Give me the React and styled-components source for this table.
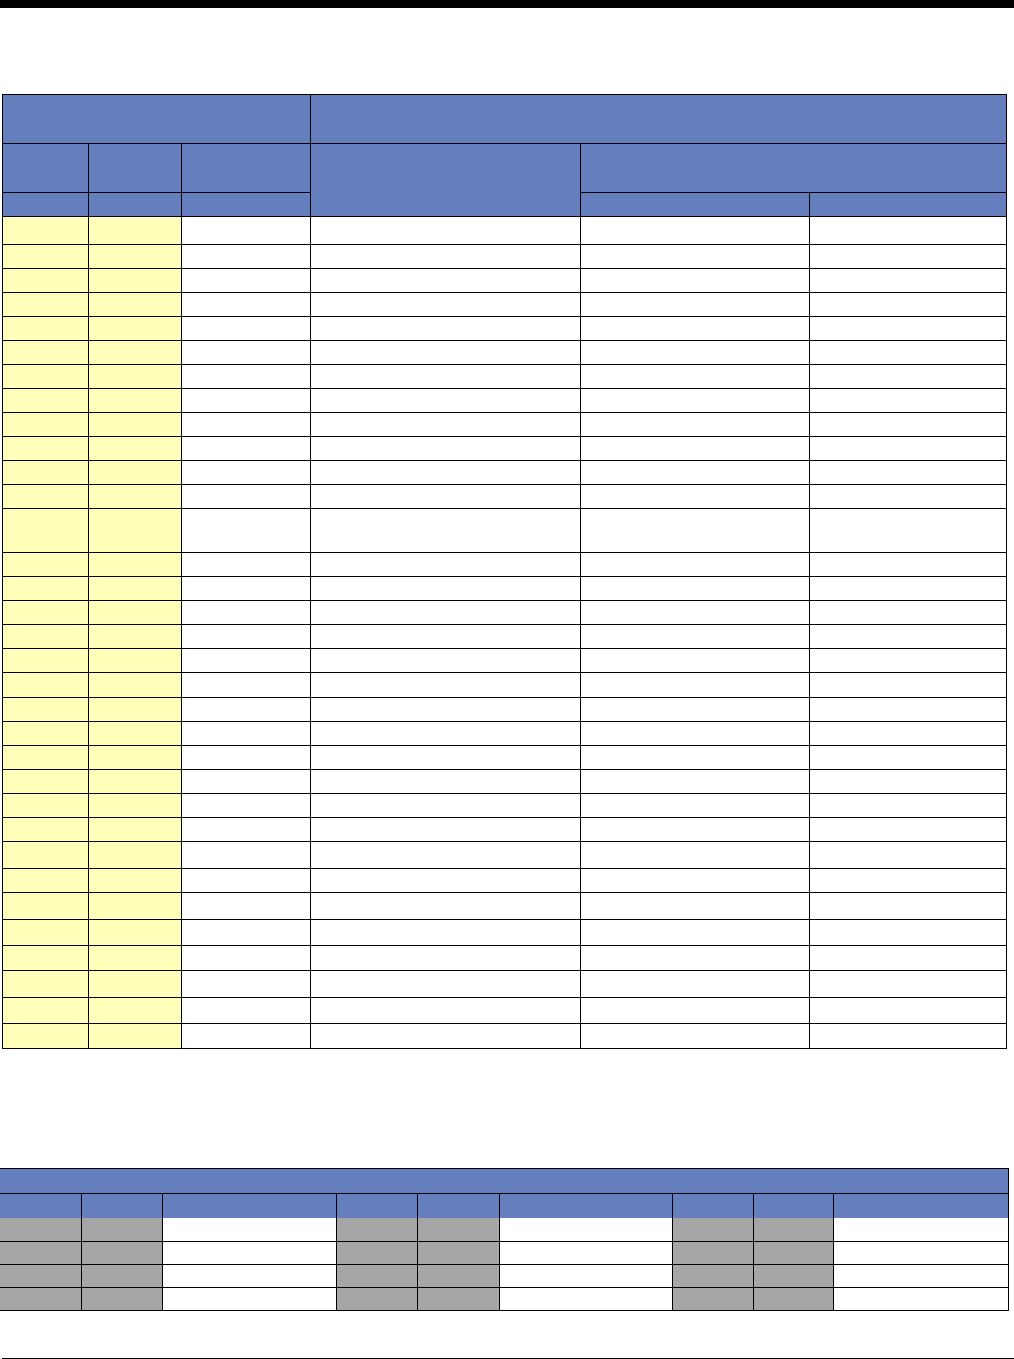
import React from "react";
import styled, { createGlobalStyle } from "styled-components";

const GlobalStyle = createGlobalStyle`
  html, body { margin: 0; padding: 0; background: #ffffff; }
  body { font-family: "Liberation Sans", Arial, sans-serif; }
`;

const BLUE = "#657ebd";
const YELLOW = "#ffffb9";
const GREY = "#a6a6a6";
const WHITE = "#ffffff";

const Page = styled.div`
  display: flex;
  flex-direction: column;
  width: 1014px;
  min-height: 1359px;
`;

const TopBar = styled.div`
  height: 8px;
  background: #000;
`;

const GridTable = styled.div`
  display: grid;
  background: #000;
  gap: 1px;
  padding: ${(p) => p.$pad};
  margin: ${(p) => p.$margin};
  grid-template-columns: ${(p) => p.$cols};
  grid-template-rows: ${(p) => p.$rows};
  align-self: flex-start;
`;

const HeadCell = styled.div`
  background: ${BLUE};
  grid-column: ${(p) => p.$col || "auto"};
  grid-row: ${(p) => p.$row || "auto"};
  margin-bottom: ${(p) => (p.$bleed ? "-1px" : "0")};
`;

const Cell = styled.div`
  background: ${(p) => p.$tone};
`;

const FooterRule = styled.div`
  height: 1px;
  background: #000;
  margin: 47px 0 0 2px;
`;

const toPx = (arr) => arr.map((v) => `${v}px`).join(" ");

// Table 1 geometry
const T1_COLS = [85, 92, 128, 269, 228, 196];
const T1_LINES = [
  94, 143, 192, 216, 244, 268, 292, 316, 340, 364, 388, 412, 436, 460, 484,
  508, 552, 576, 600, 624, 648, 672, 697, 721, 745, 769, 793, 817, 841, 868,
  892, 919, 945, 970, 997, 1023, 1048,
];
const T1_ROWS = T1_LINES.slice(1).map((v, i) => v - T1_LINES[i] - 1);
const T1_DATA_ROWS = T1_ROWS.length - 3;
const T1_TONES = [YELLOW, YELLOW, WHITE, WHITE, WHITE, WHITE];

// Table 2 geometry
const T2_COLS = [81, 80, 173, 80, 81, 172, 80, 79, 174];
const T2_ROWS = [24, 23, 23, 22, 22, 22];
const T2_TONES = [GREY, GREY, WHITE, GREY, GREY, WHITE, GREY, GREY, WHITE];

function MainTable() {
  return (
    <GridTable
      $pad="1px"
      $margin="86px 0 0 2px"
      $cols={toPx(T1_COLS)}
      $rows={toPx(T1_ROWS)}
    >
      <HeadCell $col="1 / 4" $row="1" />
      <HeadCell $col="4 / 7" $row="1" />
      <HeadCell $col="1" $row="2" />
      <HeadCell $col="2" $row="2" />
      <HeadCell $col="3" $row="2" />
      <HeadCell $col="4" $row="2 / 4" />
      <HeadCell $col="5 / 7" $row="2" />
      <HeadCell $col="1" $row="3" />
      <HeadCell $col="2" $row="3" />
      <HeadCell $col="3" $row="3" />
      <HeadCell $col="5" $row="3" />
      <HeadCell $col="6" $row="3" />
      {Array.from({ length: T1_DATA_ROWS }).map((_, r) =>
        T1_TONES.map((tone, c) => <Cell key={`${r}-${c}`} $tone={tone} />)
      )}
    </GridTable>
  );
}

function SummaryTable() {
  return (
    <GridTable
      $pad="1px 1px 1px 0"
      $margin="119px 0 0 0"
      $cols={toPx(T2_COLS)}
      $rows={toPx(T2_ROWS)}
    >
      <HeadCell $col="1 / 10" $row="1" />
      {T2_COLS.map((_, c) => (
        <HeadCell key={`h${c}`} $col={`${c + 1}`} $row="2" $bleed />
      ))}
      {Array.from({ length: 4 }).map((_, r) =>
        T2_TONES.map((tone, c) => <Cell key={`${r}-${c}`} $tone={tone} />)
      )}
    </GridTable>
  );
}

export default function App() {
  return (
    <>
      <GlobalStyle />
      <Page>
        <TopBar />
        <MainTable />
        <SummaryTable />
        <FooterRule />
      </Page>
    </>
  );
}
